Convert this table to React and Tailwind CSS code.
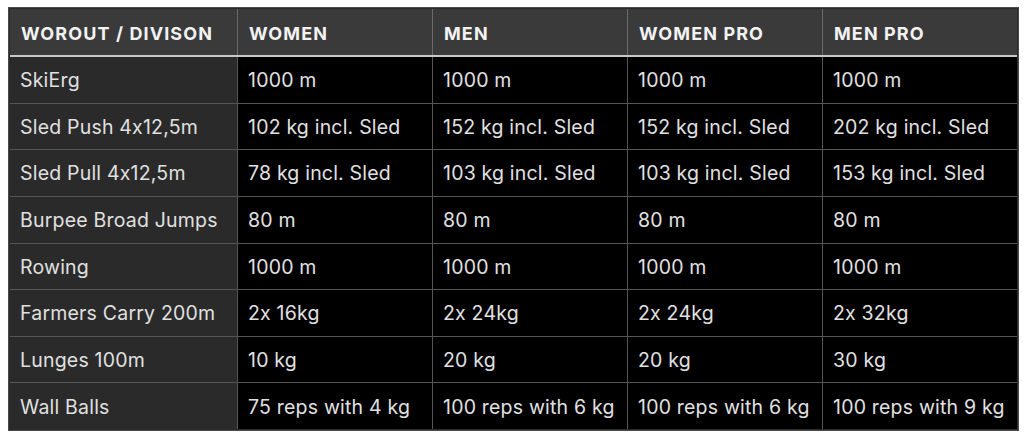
import React from "react";

const headers = ["WOROUT / DIVISON", "WOMEN", "MEN", "WOMEN PRO", "MEN PRO"];

const rows = [
  ["SkiErg", "1000 m", "1000 m", "1000 m", "1000 m"],
  ["Sled Push 4x12,5m", "102 kg incl. Sled", "152 kg incl. Sled", "152 kg incl. Sled", "202 kg incl. Sled"],
  ["Sled Pull 4x12,5m", "78 kg incl. Sled", "103 kg incl. Sled", "103 kg incl. Sled", "153 kg incl. Sled"],
  ["Burpee Broad Jumps", "80 m", "80 m", "80 m", "80 m"],
  ["Rowing", "1000 m", "1000 m", "1000 m", "1000 m"],
  ["Farmers Carry 200m", "2x 16kg", "2x 24kg", "2x 24kg", "2x 32kg"],
  ["Lunges 100m", "10 kg", "20 kg", "20 kg", "30 kg"],
  ["Wall Balls", "75 reps with 4 kg", "100 reps with 6 kg", "100 reps with 6 kg", "100 reps with 9 kg"],
];

const cols = "grid grid-cols-[227px_195px_195px_195px_1fr]";

const App = () => {
  return (
    <div className="w-[1024px] h-[441px] bg-white pt-[7px] pl-[8px] font-['Inter',sans-serif] [font-feature-settings:'calt'_0]">
      <div className="w-[1011px] h-[424px] border border-[#4a4a4a] bg-[#2a2a2a] p-px flex flex-col">
        <div className={`${cols} h-[48px] bg-[#3a3a3a] border-b-2 border-[#c8c8c8]`}>
          {headers.map((h, i) => (
            <div
              key={h}
              className={`flex items-center pl-[11px] pt-[2px] text-[18px] font-bold text-[#f2f2f2] tracking-[1.1px] ${i > 0 ? "border-l border-[#6a6a6a]" : ""}`}
            >
              {h}
            </div>
          ))}
        </div>
        {rows.map((r, ri) => (
          <div key={ri} className={`${cols} flex-1 ${ri > 0 ? "border-t border-[#555]" : ""}`}>
            {r.map((c, ci) => (
              <div
                key={ci}
                className={`flex items-center pl-[10px] pt-[2px] text-[19.5px] text-[#e0e0e0] tracking-[0.2px] whitespace-nowrap ${
                  ci === 0 ? "bg-[#2a2a2a]" : "bg-black border-l border-[#555]"
                }`}
              >
                {c}
              </div>
            ))}
          </div>
        ))}
      </div>
    </div>
  );
};

export default App;
